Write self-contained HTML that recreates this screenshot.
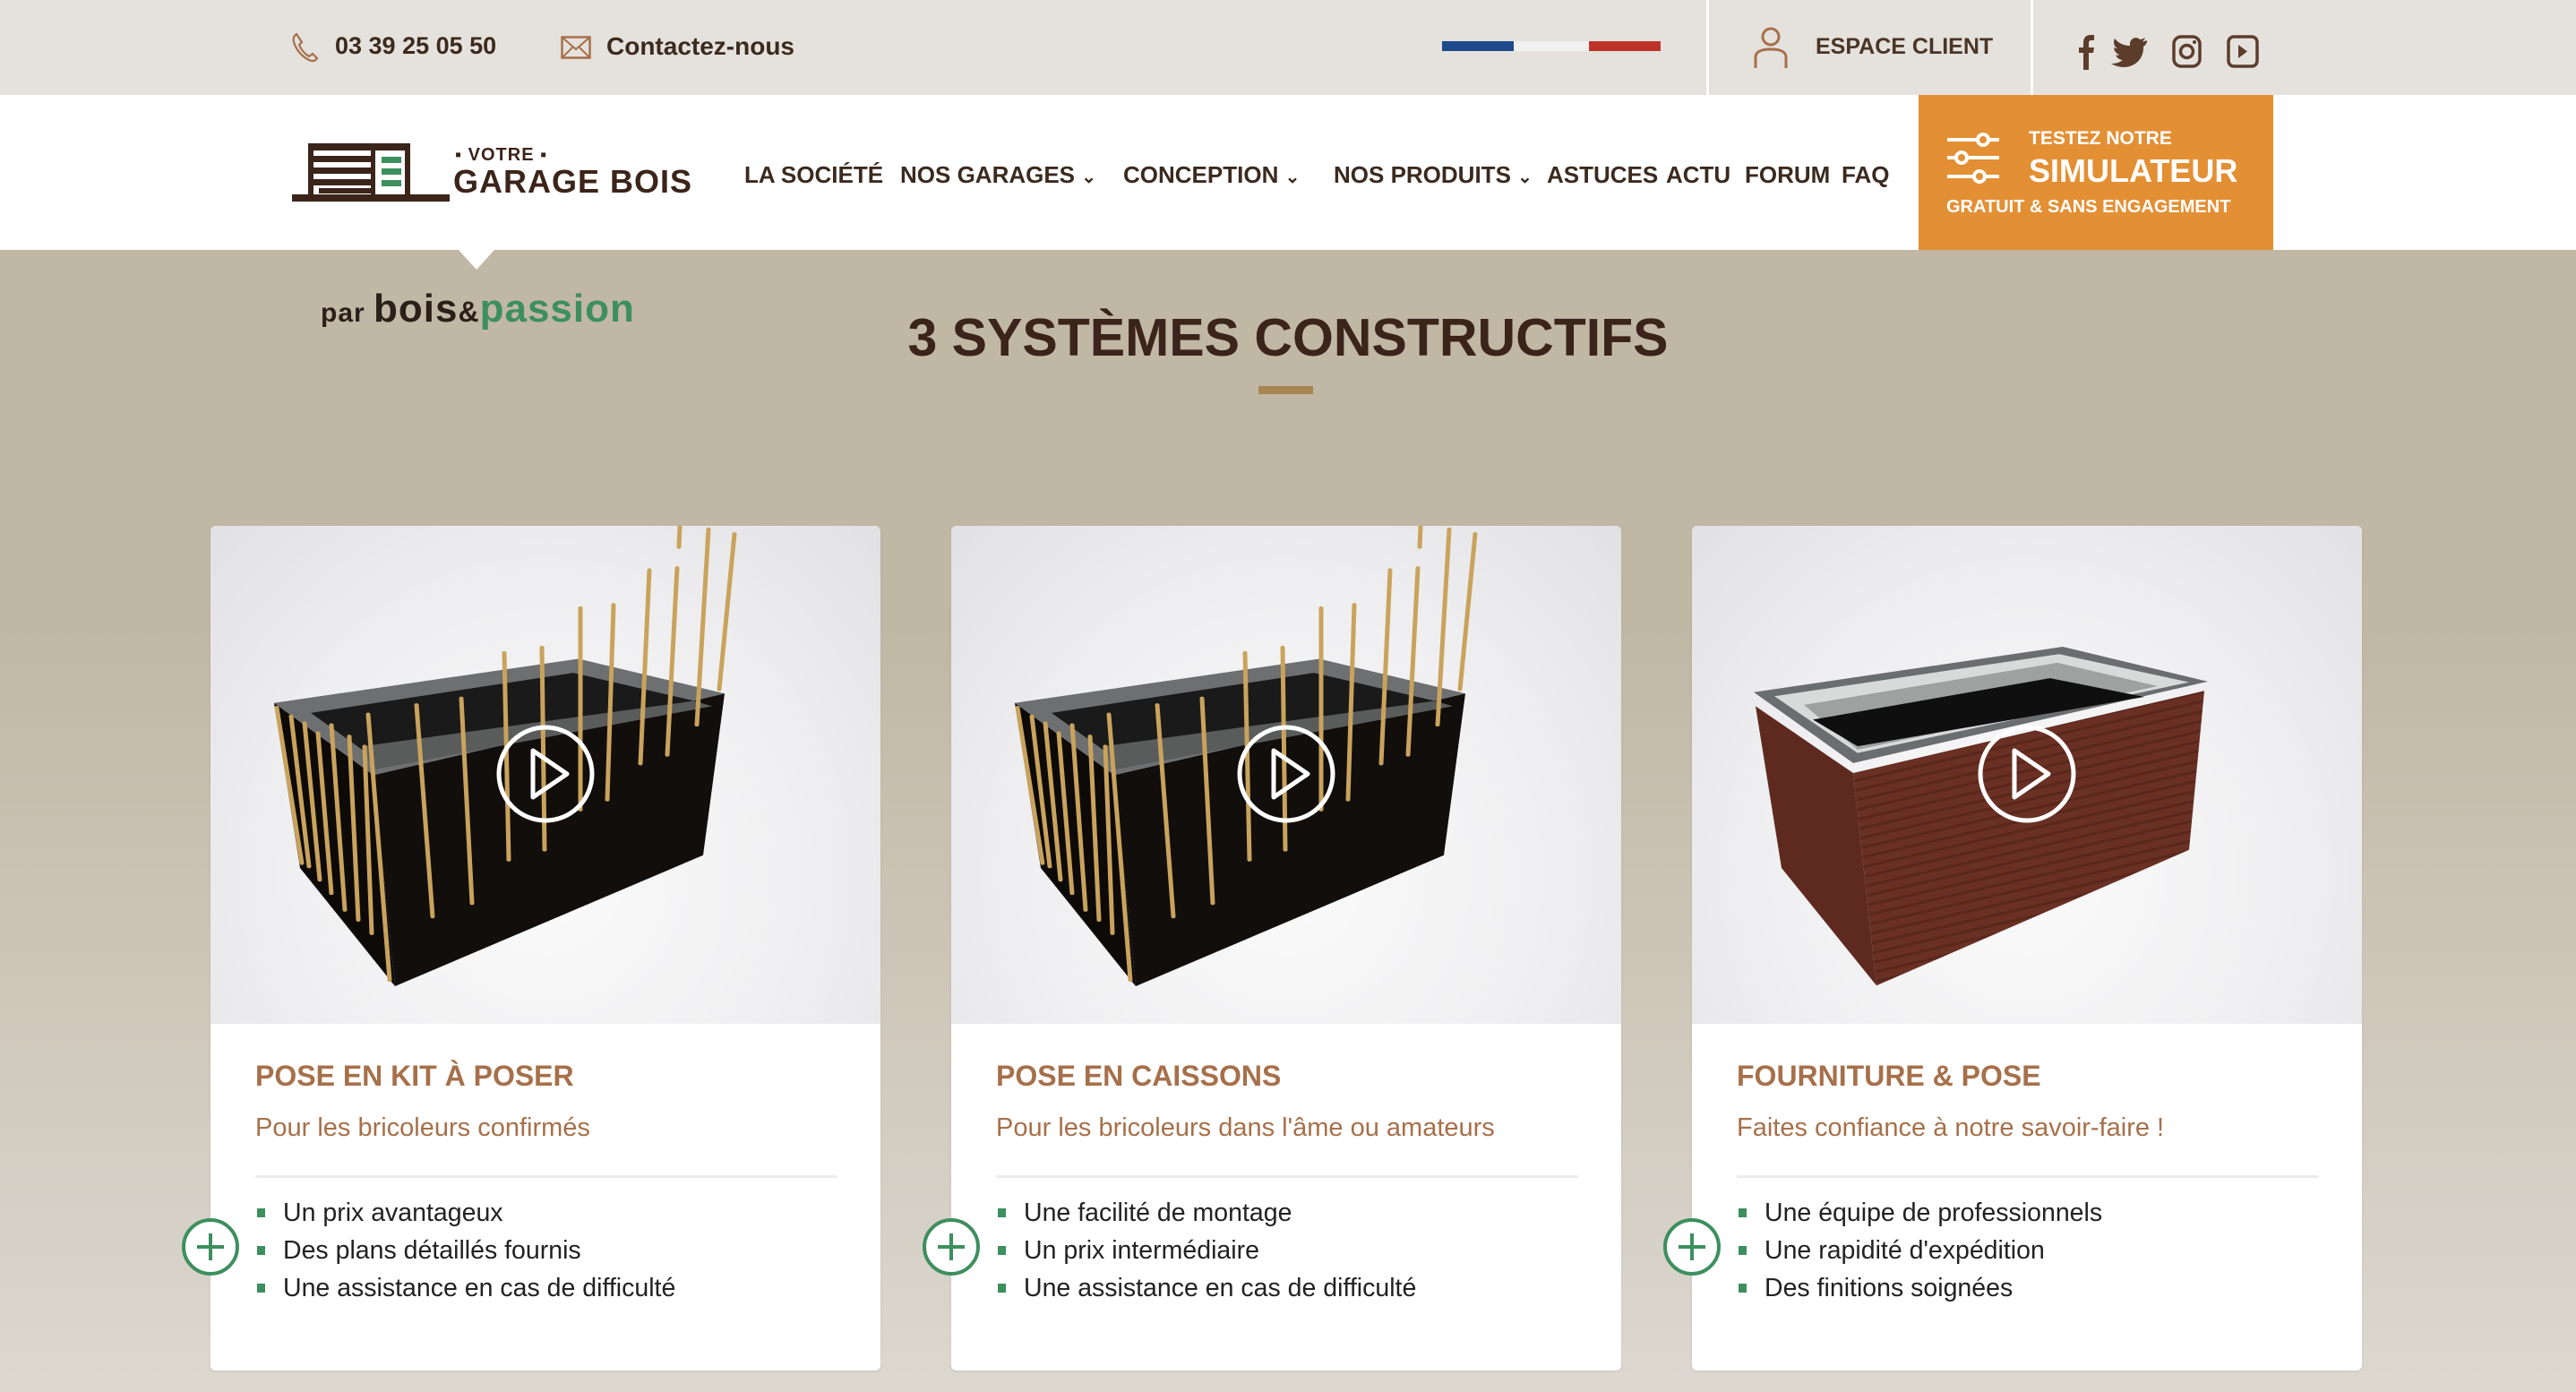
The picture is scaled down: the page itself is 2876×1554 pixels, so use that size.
<!DOCTYPE html>
<html><head><meta charset="utf-8"><style>
*{margin:0;padding:0;box-sizing:border-box}
body{width:2876px;height:1554px;overflow:hidden;font-family:"Liberation Sans",sans-serif;background:linear-gradient(#c1b7a5 0px,#c1b7a5 700px,#dcd8d0 1554px);position:relative}
.abs{position:absolute}
.top{left:0;top:0;width:2876px;height:106px;background:#e5e2dd}
.nav{left:0;top:106px;width:2876px;height:173px;background:#fff}
.tb{font-weight:bold;font-size:27px;color:#3b2a1e;top:36px}
.ni{font-weight:bold;font-size:26px;color:#3b2a1e;top:180px;white-space:nowrap}
.card{background:#fff;border-radius:6px;width:748px;height:943px;top:587px;overflow:hidden;box-shadow:0 1px 3px rgba(0,0,0,.08)}
.img{position:absolute;left:0;top:0;width:748px;height:556px;background:radial-gradient(ellipse at 50% 70%,#fbfbfb 0%,#eeeef0 60%,#e1e1e3 100%)}
.ct{position:absolute;left:50px;top:596px;font-weight:bold;font-size:32px;color:#a6704a;white-space:nowrap}
.cs{position:absolute;left:50px;font-size:29px;color:#a6704a;white-space:nowrap}
.hr{position:absolute;left:50px;width:650px;top:725px;height:3px;background:#ececf0}
ul{position:absolute;left:50px;top:746px;list-style:none}
li{font-size:28.5px;color:#222;height:42px;line-height:42px;padding-left:31px;position:relative;white-space:nowrap}
li:before{content:"";position:absolute;left:2px;top:16px;width:9px;height:10px;background:#3d8f5e}
.plus{width:64px;height:64px;border:4px solid #3d8f5e;border-radius:50%;background:#fff;top:1360px}
.plus:before{content:"";position:absolute;left:13px;top:26px;width:30px;height:4px;background:#3d8f5e}
.plus:after{content:"";position:absolute;left:26px;top:13px;width:4px;height:30px;background:#3d8f5e}
</style></head><body>
<div class="abs top"></div>
<div class="abs nav"></div>
<div class="abs" style="left:1905px;top:0;width:3px;height:106px;background:#fff"></div>
<div class="abs" style="left:2267px;top:0;width:3px;height:106px;background:#fff"></div>

<svg class="abs" style="left:325px;top:35px" width="36" height="36" viewBox="0 0 36 36"><path d="M6 3c-3 2-4 5-3 9 3 9 9 16 17 20 4 2 7 1 9-2l-5-5-4 3C15 25 11 20 9 15l3-3-6-9z" fill="none" stroke="#a6704a" stroke-width="2.2"/></svg>
<div class="abs tb" style="left:374px">03 39 25 05 50</div>
<svg class="abs" style="left:626px;top:40px" width="34" height="26" viewBox="0 0 34 26"><rect x="1.5" y="1.5" width="31" height="23" fill="none" stroke="#a6704a" stroke-width="2.5"/><path d="M2 2l15 13L32 2M2 24l11-11M32 24L21 13" fill="none" stroke="#a6704a" stroke-width="2"/></svg>
<div class="abs tb" style="left:677px;font-size:28px">Contactez-nous</div>

<div class="abs" style="left:1610px;top:46px;width:80px;height:11px;background:#1f4a8c"></div>
<div class="abs" style="left:1690px;top:46px;width:84px;height:11px;background:#f0f0f0"></div>
<div class="abs" style="left:1774px;top:46px;width:80px;height:11px;background:#be3329"></div>

<svg class="abs" style="left:1955px;top:28px" width="44" height="50" viewBox="0 0 44 50"><circle cx="22" cy="13" r="9" fill="none" stroke="#a6704a" stroke-width="3"/><path d="M5 48V36c0-6 5-9 17-9s17 3 17 9v12" fill="none" stroke="#a6704a" stroke-width="3"/></svg>
<div class="abs tb" style="left:2027px;color:#4a3526;font-size:25px;top:38px">ESPACE CLIENT</div>

<svg class="abs" style="left:2312px;top:38px" width="210" height="40" viewBox="0 0 210 40">
<path d="M14 40V21h-5v-6h5v-5c0-6 3-9 8-9h4v6h-3c-2 0-3 1-3 3v5h6l-1 6h-5v19z" fill="#5c3d2c"/>
<path d="M85 7c-2 1-4 1-6 2 2-1 3-3 4-5-2 1-4 2-6 2-4-4-11-1-11 5v2c-7 0-13-3-17-8-2 4-1 9 3 11-1 0-3 0-4-1 0 4 3 7 6 8-1 1-3 1-4 0 1 3 4 6 8 6-4 3-8 4-13 4 17 10 37 0 36-19 2-1 3-3 4-5z" fill="#5c3d2c"/>
<rect x="115" y="3" width="29" height="33" rx="8" fill="none" stroke="#5c3d2c" stroke-width="3.5"/><circle cx="129.5" cy="19.5" r="7" fill="none" stroke="#5c3d2c" stroke-width="3.5"/><circle cx="138" cy="9" r="2" fill="#5c3d2c"/>
<rect x="176" y="3" width="32" height="33" rx="6" fill="none" stroke="#5c3d2c" stroke-width="3.5"/><path d="M187 12v15l10-7.5z" fill="#5c3d2c"/>
</svg>

<svg class="abs" style="left:326px;top:160px" width="176" height="66" viewBox="0 0 176 66">
<rect x="18" y="0" width="114" height="8" fill="#3b2419"/>
<rect x="18" y="0" width="6" height="60" fill="#3b2419"/><rect x="126" y="0" width="6" height="60" fill="#3b2419"/>
<rect x="88" y="0" width="5" height="60" fill="#3b2419"/>
<rect x="24" y="14" width="64" height="7" fill="#3b2419"/><rect x="24" y="27" width="64" height="7" fill="#3b2419"/><rect x="24" y="40" width="64" height="7" fill="#3b2419"/><rect x="30" y="50" width="58" height="6" fill="#3b2419"/>
<rect x="100" y="15" width="22" height="7" fill="#3d8f5e"/><rect x="100" y="28" width="22" height="7" fill="#3d8f5e"/><rect x="100" y="41" width="22" height="7" fill="#3d8f5e"/>
<rect x="0" y="57" width="176" height="8" fill="#3b2419"/>
</svg>
<div class="abs" style="left:508px;top:162px;font-size:20px;font-weight:bold;color:#3b2419;letter-spacing:1px">▪ VOTRE ▪</div>
<div class="abs" style="left:506px;top:182px;font-size:36px;font-weight:bold;color:#3b2419;letter-spacing:1px">GARAGE BOIS</div>
<div class="abs" style="left:512px;top:279px;width:0;height:0;border-left:20px solid transparent;border-right:20px solid transparent;border-top:22px solid #fff"></div>
<div class="abs" style="left:358px;top:320px;white-space:nowrap;letter-spacing:1px"><span style="font-size:30px;font-weight:bold;color:#2b1f18">par </span><span style="font-size:44px;font-weight:bold;color:#2b1f18">bois</span><span style="font-size:32px;font-weight:bold;color:#2b1f18">&amp;</span><span style="font-size:44px;font-weight:bold;color:#3d8f5e">passion</span></div>

<div class="abs ni" style="left:831px">LA SOCIÉTÉ</div>
<div class="abs ni" style="left:1005px">NOS GARAGES <span style="font-size:20px">⌄</span></div>
<div class="abs ni" style="left:1254px">CONCEPTION <span style="font-size:20px">⌄</span></div>
<div class="abs ni" style="left:1489px">NOS PRODUITS <span style="font-size:20px">⌄</span></div>
<div class="abs ni" style="left:1727px">ASTUCES</div>
<div class="abs ni" style="left:1860px">ACTU</div>
<div class="abs ni" style="left:1948px">FORUM</div>
<div class="abs ni" style="left:2056px">FAQ</div>

<div class="abs" style="left:2142px;top:106px;width:396px;height:173px;background:#e38f34"></div>
<svg class="abs" style="left:2172px;top:146px" width="62" height="62" viewBox="0 0 62 62"><g stroke="#fff" stroke-width="4" fill="none"><path d="M2 10h34M48 10h12M2 30h10M24 30h36M2 51h30M44 51h16"/><circle cx="42" cy="10" r="6"/><circle cx="18" cy="30" r="6"/><circle cx="38" cy="51" r="6"/></g></svg>
<div class="abs" style="left:2265px;top:143px;font-size:21px;font-weight:bold;color:#fff">TESTEZ NOTRE</div>
<div class="abs" style="left:2265px;top:170px;font-size:36px;font-weight:bold;color:#fff">SIMULATEUR</div>
<div class="abs" style="left:2173px;top:220px;font-size:20px;font-weight:bold;color:#fff;white-space:nowrap">GRATUIT &amp; SANS ENGAGEMENT</div>

<div class="abs" style="left:0;width:2876px;top:343px;text-align:center;font-size:59px;font-weight:bold;color:#3b2419">3 SYSTÈMES CONSTRUCTIFS</div>
<div class="abs" style="left:1405px;top:431px;width:61px;height:9px;background:#a88550"></div>

<!-- card 1 -->
<div class="abs card" style="left:235px">
<div class="img"><svg width="748" height="556" viewBox="0 0 748 556">
<g transform="scale(1,0.746)">
<polygon points="71,265 182,373 206,689 100,512" fill="#0d0a08"/>
<polygon points="182,373 574,251 550,493 206,689" fill="#110e0c"/>
<polygon points="71,265 411,199 574,251 182,373" fill="#6d6f70"/>
<polygon points="112,280 405,220 540,262 185,350" fill="#1a1a1a"/>
<polygon points="170,330 540,262 560,270 182,365" fill="#5a5c5c"/>
<g stroke="#c9a35d" stroke-width="5" stroke-linecap="round">
<line x1="74" y1="272" x2="102" y2="505"/><line x1="90" y1="285" x2="110" y2="510"/><line x1="105" y1="295" x2="122" y2="530"/><line x1="120" y1="310" x2="135" y2="550"/><line x1="135" y1="298" x2="150" y2="575"/><line x1="155" y1="315" x2="165" y2="590"/><line x1="172" y1="330" x2="180" y2="610"/><line x1="176" y1="282" x2="200" y2="680"/>
<line x1="230" y1="268" x2="248" y2="585"/><line x1="280" y1="258" x2="292" y2="565"/><line x1="328" y1="190" x2="333" y2="500"/><line x1="370" y1="182" x2="373" y2="485"/><line x1="413" y1="123" x2="413" y2="425"/><line x1="450" y1="118" x2="443" y2="410"/><line x1="490" y1="66" x2="480" y2="356"/><line x1="521" y1="63" x2="510" y2="343"/><line x1="556" y1="5" x2="543" y2="298"/><line x1="585" y1="12" x2="568" y2="245"/><line x1="524" y1="0" x2="523" y2="32"/>
</g></g>
<circle cx="374" cy="277" r="52" fill="none" stroke="#fff" stroke-width="5"/><path d="M360 251v52l38-26z" fill="none" stroke="#fff" stroke-width="5" stroke-linejoin="round"/>
</svg></div>
<div class="ct">POSE EN KIT À POSER</div>
<div class="cs" style="top:656px">Pour les bricoleurs confirmés</div>
<div class="hr"></div>
<ul><li>Un prix avantageux</li><li>Des plans détaillés fournis</li><li>Une assistance en cas de difficulté</li></ul>
</div>

<!-- card 2 -->
<div class="abs card" style="left:1062px">
<div class="img"><svg width="748" height="556" viewBox="0 0 748 556">
<g transform="scale(1,0.746)">
<polygon points="71,265 182,373 206,689 100,512" fill="#0d0a08"/>
<polygon points="182,373 574,251 550,493 206,689" fill="#110e0c"/>
<polygon points="71,265 411,199 574,251 182,373" fill="#6d6f70"/>
<polygon points="112,280 405,220 540,262 185,350" fill="#1a1a1a"/>
<polygon points="170,330 540,262 560,270 182,365" fill="#5a5c5c"/>
<g stroke="#c9a35d" stroke-width="5" stroke-linecap="round">
<line x1="74" y1="272" x2="102" y2="505"/><line x1="90" y1="285" x2="110" y2="510"/><line x1="105" y1="295" x2="122" y2="530"/><line x1="120" y1="310" x2="135" y2="550"/><line x1="135" y1="298" x2="150" y2="575"/><line x1="155" y1="315" x2="165" y2="590"/><line x1="172" y1="330" x2="180" y2="610"/><line x1="176" y1="282" x2="200" y2="680"/>
<line x1="230" y1="268" x2="248" y2="585"/><line x1="280" y1="258" x2="292" y2="565"/><line x1="328" y1="190" x2="333" y2="500"/><line x1="370" y1="182" x2="373" y2="485"/><line x1="413" y1="123" x2="413" y2="425"/><line x1="450" y1="118" x2="443" y2="410"/><line x1="490" y1="66" x2="480" y2="356"/><line x1="521" y1="63" x2="510" y2="343"/><line x1="556" y1="5" x2="543" y2="298"/><line x1="585" y1="12" x2="568" y2="245"/><line x1="524" y1="0" x2="523" y2="32"/>
</g></g>
<circle cx="374" cy="277" r="52" fill="none" stroke="#fff" stroke-width="5"/><path d="M360 251v52l38-26z" fill="none" stroke="#fff" stroke-width="5" stroke-linejoin="round"/>
</svg></div>
<div class="ct">POSE EN CAISSONS</div>
<div class="cs" style="top:656px">Pour les bricoleurs dans l'âme ou amateurs</div>
<div class="hr"></div>
<ul><li>Une facilité de montage</li><li>Un prix intermédiaire</li><li>Une assistance en cas de difficulté</li></ul>
</div>

<!-- card 3 -->
<div class="abs card" style="left:1889px">
<div class="img"><svg width="748" height="556" viewBox="0 0 748 556">
<defs><pattern id="st" width="10" height="14" patternUnits="userSpaceOnUse" patternTransform="rotate(-17)"><rect width="10" height="14" fill="#6a3024"/><rect y="10" width="10" height="4" fill="#5a271d"/></pattern></defs>
<g transform="scale(1,0.746)">
<polygon points="71,270 180,370 206,688 100,512" fill="#5e2a20"/>
<polygon points="180,370 572,247 555,485 206,688" fill="url(#st)"/>
<polygon points="69,249 414,181 576,233 180,355" fill="#6b6e6e"/>
<polygon points="92,255 410,192 555,234 185,340" fill="#d8dada"/>
<polygon points="125,268 408,205 520,240 185,335" fill="#9ea1a0"/>
<polygon points="135,290 400,228 505,256 185,330" fill="#0f0f0f"/>
</g>
<circle cx="374" cy="277" r="52" fill="none" stroke="#fff" stroke-width="5"/><path d="M360 251v52l38-26z" fill="none" stroke="#fff" stroke-width="5" stroke-linejoin="round"/>
</svg></div>
<div class="ct">FOURNITURE &amp; POSE</div>
<div class="cs" style="top:656px">Faites confiance à notre savoir-faire !</div>
<div class="hr"></div>
<ul><li>Une équipe de professionnels</li><li>Une rapidité d'expédition</li><li>Des finitions soignées</li></ul>
</div>

<div class="abs plus" style="left:203px"></div>
<div class="abs plus" style="left:1030px"></div>
<div class="abs plus" style="left:1857px"></div>
</body></html>
